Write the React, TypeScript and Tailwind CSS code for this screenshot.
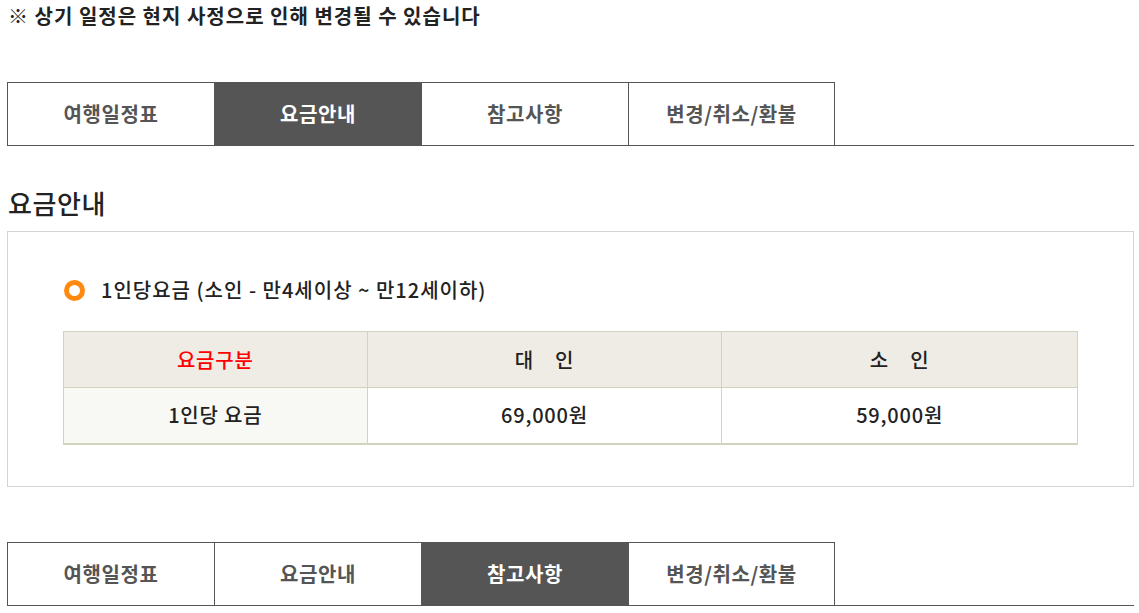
import React from 'react'

const font = { fontFamily: '"Noto Sans CJK KR", "Noto Sans", sans-serif' }

interface TabBarProps {
  active: number
}

const tabs = ['여행일정표', '요금안내', '참고사항', '변경/취소/환불']

const TabBar: React.FC<TabBarProps> = ({ active }) => (
  <ul className="flex border-b border-[#555]">
    {tabs.map((t, i) => (
      <li
        key={t}
        className={`flex h-[63px] w-[207px] items-center justify-center border-t border-l border-[#555] text-[20px] font-bold tracking-[0.6px] ${
          i === tabs.length - 1 ? 'border-r' : ''
        } ${i === active ? 'bg-[#555] text-white' : 'bg-white text-[#555]'}`}
      >
        {t}
      </li>
    ))}
  </ul>
)

export default function App() {
  return (
    <div className="min-h-screen bg-white pl-[7px] pr-[5px] text-[#222]" style={font}>
      <p className="pl-px pt-[3px] text-[20px] font-bold leading-[26px] tracking-[1px]">
        ※ 상기 일정은 현지 사정으로 인해 변경될 수 있습니다
      </p>

      <div className="mt-[53px]">
        <TabBar active={1} />
      </div>

      <h2 className="mt-[39px] pl-px text-[26px] font-medium leading-[36px] tracking-[0.6px]">요금안내</h2>

      <div className="mt-[10px] border border-[#d4d4d4] px-[55px] pt-[45px] pb-[41px]">
        <div className="flex items-center gap-[16px] pl-px">
          <span className="h-[21px] w-[21px] rounded-full border-[5px] border-[#ff8a0f]" />
          <span className="text-[20px] font-medium leading-[26px] tracking-[1px]">
            1인당요금 (소인 - 만4세이상 ~ 만12세이하)
          </span>
        </div>

        <table className="mt-[28px] w-[1015px] border-collapse border-b-2 border-[#d2d3bc] text-[20px] font-medium tracking-[0.8px]">
          <colgroup>
            <col className="w-[304px]" />
            <col className="w-[355px]" />
            <col className="w-[356px]" />
          </colgroup>
          <thead>
            <tr className="h-[56px] bg-[#eeece4]">
              <th className="border border-[#d2d3bc] font-medium text-[#ff0000]">요금구분</th>
              <th className="border border-[#d2d3bc] font-medium">대&nbsp;&nbsp;&nbsp;&nbsp;인</th>
              <th className="border border-[#d2d3bc] font-medium">소&nbsp;&nbsp;&nbsp;&nbsp;인</th>
            </tr>
          </thead>
          <tbody>
            <tr className="h-[56px]">
              <td className="border border-[#d2d3bc] bg-[#f8f8f4] text-center">1인당 요금</td>
              <td className="border border-[#d2d3bc] text-center">69,000원</td>
              <td className="border border-[#d2d3bc] text-center">59,000원</td>
            </tr>
          </tbody>
        </table>
      </div>

      <div className="mt-[55px]">
        <TabBar active={2} />
      </div>
    </div>
  )
}
